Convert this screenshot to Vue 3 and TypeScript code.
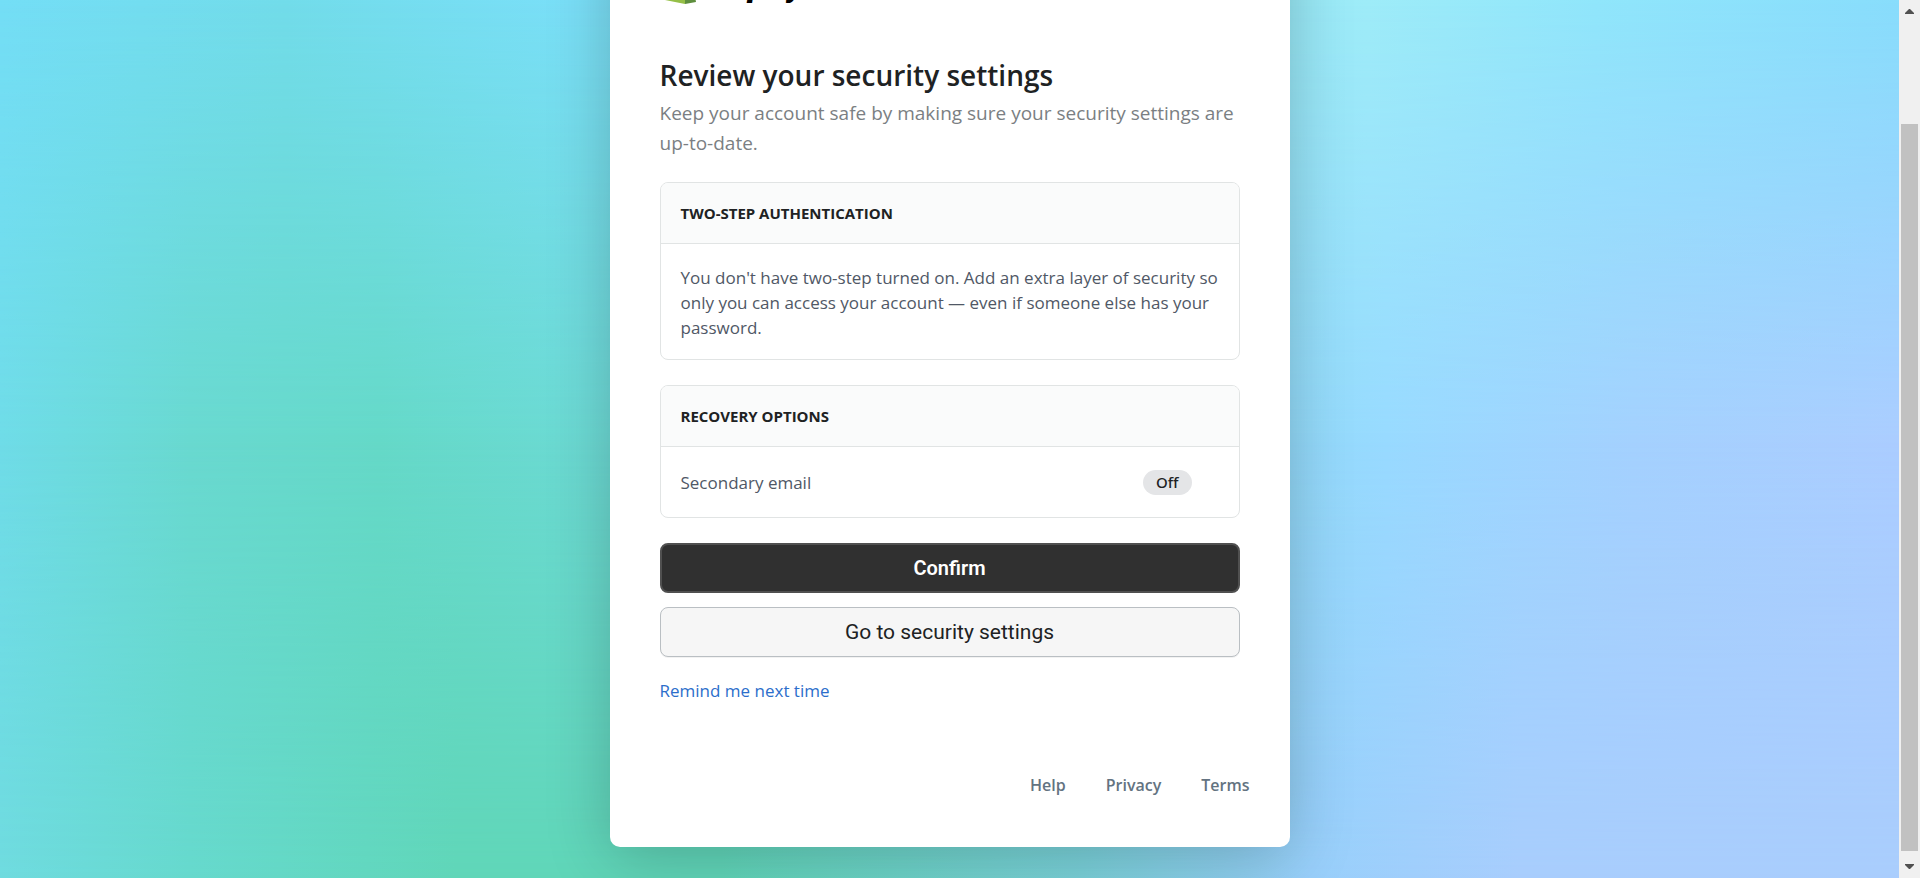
<script setup lang="ts">
interface FooterLink {
  label: string
  href: string
}

const footerLinks: FooterLink[] = [
  { label: 'Help', href: '#help' },
  { label: 'Privacy', href: '#privacy' },
  { label: 'Terms', href: '#terms' },
]

const secondaryEmailStatus = 'Off'
</script>

<template>
  <div class="window">
    <div class="page">
      <main class="card">
        <header class="logo">
          <svg class="bag" viewBox="0 0 36 40" aria-hidden="true">
            <path d="M4 10 L25 5 L25 40 L0 35 Z" fill="#95bf47" />
            <path d="M25 5 L31 9 L36 38 L25 40 Z" fill="#5e8e3e" />
            <path d="M9 11 C10 3 18 -2 20 8" fill="none" stroke="#95bf47" stroke-width="2" />
          </svg>
          <span class="wordmark">shopify</span>
        </header>

        <section class="content">
          <h1>Review your security settings</h1>
          <p class="lead">Keep your account safe by making sure your security settings are up-to-date.</p>

          <section class="panel">
            <h2>Two-step authentication</h2>
            <p class="panel-body">
              You don't have two-step turned on. Add an extra layer of security so only you can access
              your account — even if someone else has your password.
            </p>
          </section>

          <section class="panel">
            <h2>Recovery options</h2>
            <div class="panel-body row">
              <span>Secondary email</span>
              <span class="badge">{{ secondaryEmailStatus }}</span>
            </div>
          </section>

          <div class="actions">
            <button type="button" class="primary">Confirm</button>
            <button type="button" class="secondary">Go to security settings</button>
          </div>
          <a class="remind" href="#remind">Remind me next time</a>
        </section>

        <footer>
          <a v-for="link in footerLinks" :key="link.label" :href="link.href">{{ link.label }}</a>
        </footer>
      </main>
    </div>

    <div class="scrollbar" aria-hidden="true">
      <svg viewBox="0 0 9 5"><path d="M0 5 L0 4 L4 0 L5 0 L9 4 L9 5 Z" fill="#505050" /></svg>
      <div class="thumb"></div>
      <svg viewBox="0 0 9 5"><path d="M0 0 L0 1 L4 5 L5 5 L9 1 L9 0 Z" fill="#505050" /></svg>
    </div>
  </div>
</template>

<style>
body {
  overflow: hidden;
}
</style>

<style scoped>
* {
  box-sizing: border-box;
}

.window {
  display: flex;
  height: 100vh;
  overflow: hidden;
  font-family: 'Open Sans', 'Noto Sans', sans-serif;
  color: #202223;
}

/* Three horizontal colour bands, faded into each other from top to bottom */
.page {
  position: relative;
  isolation: isolate;
  flex: 1;
  min-width: 0;
  display: flex;
  align-items: flex-end;
  justify-content: center;
  padding-bottom: 31px;
  background: linear-gradient(90deg, #74def6 0%, #72dcea 15%, #7adff8 30%, #8ce6f8 55%, #9eecf8 72%, #90e6fb 84%, #88ddfc 100%);
}

.page::before,
.page::after {
  content: '';
  position: absolute;
  inset: 0;
  z-index: -1;
}

.page::before {
  background: linear-gradient(90deg, #6fdce8 0%, #69d9d0 10%, #65d9c8 20%, #6cdad4 31%, #80dbe8 50%, #98daff 73%, #a4d1fe 86%, #abcdff 100%);
  mask-image: linear-gradient(180deg, transparent 0%, #000 50%);
}

.page::after {
  background: linear-gradient(90deg, #6fdbdf 0%, #66d9cd 10%, #60d6b8 24%, #60d6b8 38%, #7ad2da 57%, #98cffb 69%, #a8cdfd 80%, #a9cdfd 100%);
  mask-image: linear-gradient(180deg, transparent 50%, #000 100%);
}

.card {
  flex: 0 1 680px;
  padding: 50px 50px 49px;
  border-radius: 10px;
  background: #fff;
  box-shadow: 0 10px 64px rgba(0, 0, 0, 0.22);
}

.logo {
  display: flex;
  align-items: flex-end;
  margin-bottom: 50px;
}

.bag {
  width: 36px;
  height: 40px;
}

.wordmark {
  font: italic 900 33px/38px Roboto, sans-serif;
  color: #000;
}

h1 {
  margin: 0 0 2px;
  font-size: 28px;
  line-height: 42px;
  font-weight: 600;
}

.lead {
  margin: 0 0 24px;
  font-size: 19px;
  line-height: 30px;
  color: #7b7f83;
}

.panel {
  margin-bottom: 25px;
  border: 1px solid #e1e4e4;
  border-radius: 8px;
  overflow: hidden;
}

h2 {
  margin: 0;
  padding: 20px;
  border-bottom: 1px solid #e1e4e4;
  background: #fafbfb;
  font-size: 15px;
  line-height: 20px;
  font-weight: 700;
  text-transform: uppercase;
}

.panel-body {
  margin: 0;
  padding: 21px 20px 19px;
  font-size: 17px;
  line-height: 25px;
  color: #505866;
}

.row {
  display: flex;
  align-items: center;
  justify-content: space-between;
  padding: 23px 47px 22px 20px;
}

.badge {
  padding: 0 13px;
  border-radius: 13px;
  background: #e4e5e7;
  font-family: 'Noto Sans', 'Open Sans', sans-serif;
  font-size: 15px;
  font-weight: 500;
  color: #202223;
}

.actions {
  display: grid;
  gap: 14px;
  margin-bottom: 20px;
}

button {
  height: 50px;
  border-radius: 8px;
  font-family: Roboto, 'Open Sans', sans-serif;
  font-size: 20px;
  cursor: pointer;
}

.primary {
  border: 2px solid #505050;
  background: #303030;
  font-weight: 600;
  color: #fff;
}

.secondary {
  border: 1px solid #babfc3;
  background: #f6f6f6;
  box-shadow: 0 1px 0 rgba(0, 0, 0, 0.05);
  font-size: 21px;
  color: #202223;
}

.remind {
  display: block;
  font-size: 17px;
  line-height: 28px;
  color: #2c6ecb;
  text-decoration: none;
}

footer {
  display: flex;
  justify-content: flex-end;
  gap: 40px;
  margin: 68px -10px 0 0;
  font-size: 16px;
  line-height: 25px;
  font-weight: 600;
}

footer a {
  color: #637381;
  text-decoration: none;
}

.scrollbar {
  flex: none;
  width: 21px;
  display: flex;
  flex-direction: column;
  align-items: center;
  padding: 9px 2px;
  background: #f0f0f0;
}

.scrollbar svg {
  flex: none;
  width: 9px;
  height: 5px;
}

.thumb {
  flex: 1;
  width: 17px;
  margin: 110px 0 13px;
  background: #c1c1c1;
}
</style>
